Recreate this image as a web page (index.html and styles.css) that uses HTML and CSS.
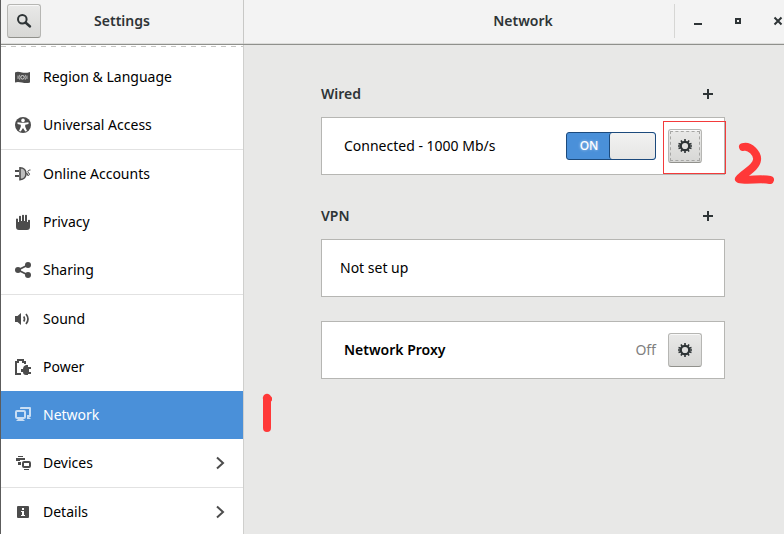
FILE: index.html
```html
<!DOCTYPE html>
<html lang="en">
<head>
    <meta charset="UTF-8">
    <meta name="viewport" content="width=device-width, initial-scale=1.0">
    <title>Settings - Network</title>
    <link rel="stylesheet" href="styles.css">
</head>
<body>
    <div class="window">
        <!-- Header bar -->
        <header class="header">
            <div class="header-left">
                <button class="btn" aria-label="Search">
                    <svg class="icon" viewBox="0 0 16 16"><circle cx="6.3" cy="6.3" r="4.3" fill="none" stroke="currentColor" stroke-width="2"/><path d="M9.5 9.5l4.5 4" stroke="currentColor" stroke-width="2.4" stroke-linecap="round"/></svg>
                </button>
                <h1 class="title">Settings</h1>
            </div>
            <div class="header-right">
                <h2 class="title">Network</h2>
                <div class="controls">
                    <button aria-label="Minimize"><svg class="icon" viewBox="0 0 16 16"><path d="M4 10h8v2H4z"/></svg></button>
                    <button aria-label="Maximize"><svg class="icon" viewBox="0 0 16 16"><path d="M5 5h6v6H5zM7 7v2h2V7z" fill-rule="evenodd"/></svg></button>
                    <button aria-label="Close"><svg class="icon" viewBox="0 0 16 16"><path d="M4.5 4.5l7 7M11.5 4.5l-7 7" stroke="currentColor" stroke-width="2"/></svg></button>
                </div>
            </div>
        </header>

        <div class="content">
            <!-- Sidebar -->
            <nav class="sidebar">
                <a href="#region">
                    <svg class="icon" viewBox="0 0 16 16"><path d="M0 3.5c2.5-1.3 4.5-.5 7 0s5 .5 8-.5v10.500c-3 1-5.500.5-8 0s-4.500-1-7 0z"/><g fill="none" stroke="#d8d8d8"><circle cx="7.500" cy="8.300" r="1.800"/><path d="M4.800 5.800q-1.600 2.500 0 5M10.200 5.800q1.600 2.500 0 5M3 6.500v3.500M12 6.500v3.500" stroke-width=".7"/></g></svg>
                    <span>Region &amp; Language</span>
                </a>
                <a href="#access">
                    <svg class="icon" viewBox="0 0 16 16"><circle cx="8" cy="8" r="8"/><circle cx="8" cy="3.4" r="1.8" fill="#fff"/><path d="M2.500 5.200l4 .5h3l4-.5v1.800l-3.300.8v2l1.800 4.200-1.700.6L8 11l-2.300 3.600-1.700-.6 1.800-4.200v-2L2.500 7z" fill="#fff"/></svg>
                    <span>Universal Access</span>
                </a>
                <a href="#accounts" class="divided">
                    <svg class="icon" viewBox="0 0 16 16"><path d="M0 4h4v2H0zM0 9h4v2H0z"/><path d="M5 1.800c8 0 8 11.800 0 11.800z" fill="#bdbdbd" stroke="currentColor" stroke-width="1.600"/><path d="M11 7.700h1.500v1.600q2 .4 2-1t-1.500-1.800q-.8-2.500 2.500-2.500" fill="none" stroke="currentColor"/></svg>
                    <span>Online Accounts</span>
                </a>
                <a href="#privacy">
                    <svg class="icon" viewBox="0 0 16 16"><path d="M1 5q0-.6 1-.6t1 .6v3h1V2.500q0-.8 1-.8t1 .8V7h1V1.600q0-.8 1-.8t1 .8V7h1V1.600q0-.8 1-.8t1 .8V8h1V6.500q0-.7 1-.7t1 .7V13q0 3-3 3H4q-3 0-3-3z"/></svg>
                    <span>Privacy</span>
                </a>
                <a href="#sharing">
                    <svg class="icon" viewBox="0 0 16 16"><path d="M13 3L3 8l10 5" fill="none" stroke="currentColor" stroke-width="1.800"/><circle cx="13" cy="3" r="3"/><circle cx="3" cy="8" r="3"/><circle cx="13" cy="13" r="3"/></svg>
                    <span>Sharing</span>
                </a>
                <a href="#sound" class="divided">
                    <svg class="icon" viewBox="0 0 16 16"><path d="M0 5h2.500L6 2v12l-3.500-3H0z"/><path d="M8.700 5.500q1.600 2.500 0 5M11 3q4 5 0 10" fill="none" stroke="currentColor" stroke-width="1.700"/></svg>
                    <span>Sound</span>
                </a>
                <a href="#power">
                    <svg class="icon" viewBox="0 0 16 16"><path d="M6 15H1V3h2V1h5v2h2v2" fill="none" stroke="currentColor" stroke-width="2"/><path d="M13 6v2h3v2h-2v3h2v2h-3v1h-2q-3 0-3-3H6v-3h2q0-3 3-4z"/></svg>
                    <span>Power</span>
                </a>
                <a href="#network" class="selected">
                    <svg class="icon" viewBox="0 0 16 16"><path d="M6 2V1h9v8h-3" fill="none" stroke="currentColor" stroke-width="2" stroke-linejoin="round"/><rect x="1" y="4" width="9" height="7" rx="1" fill="none" stroke="currentColor" stroke-width="2"/><path d="M3 12h5l2 2H1zM12 10h2l2 2h-4z"/></svg>
                    <span>Network</span>
                </a>
                <a href="#devices">
                    <svg class="icon" viewBox="0 0 16 16"><path d="M3 1h5v1H3zM1 3h9v2H5v1H1zM3 7h3v3H3zM9 14h5v1H9z"/><rect x="8" y="7" width="7" height="5" rx="1" fill="none" stroke="currentColor" stroke-width="2"/></svg>
                    <span>Devices</span>
                    <svg class="icon arrow" viewBox="0 0 16 16"><path d="M4 2.500L10 8l-6 5.500" fill="none" stroke="currentColor" stroke-width="2"/></svg>
                </a>
                <a href="#details" class="divided">
                    <svg class="icon" viewBox="0 0 16 16"><path d="M3 2h10q1 0 1 1v10q0 1-1 1H3q-1 0-1-1V3q0-1 1-1zM7 4v2h2V4zM6 7v1h1v3H6v1h4v-1H9V7z" fill-rule="evenodd"/></svg>
                    <span>Details</span>
                    <svg class="icon arrow" viewBox="0 0 16 16"><path d="M4 2.500L10 8l-6 5.500" fill="none" stroke="currentColor" stroke-width="2"/></svg>
                </a>
            </nav>

            <!-- Network panel -->
            <main class="panel">
                <svg class="mark mark-one" viewBox="0 0 10 40"><path d="M5 5v30M5 5l1 1" fill="none" stroke="#ff3838" stroke-width="8" stroke-linecap="round"/></svg>
                <div class="panel-inner">
                    <section>
                        <div class="section-head">
                            <h3>Wired</h3>
                            <button class="add" aria-label="Add wired connection"><svg class="icon" viewBox="0 0 16 16"><path d="M7 3h2v4h4v2H9v4H7V9H3V7h4z"/></svg></button>
                        </div>
                        <div class="card">
                            <label class="name" for="wired">Connected - 1000 Mb/s</label>
                            <span class="switch">
                                <input type="checkbox" id="wired" checked>
                                <span class="switch-text">ON</span>
                            </span>
                            <button class="btn focused" aria-label="Wired options">
                                <svg class="icon" viewBox="0 0 16 16"><circle cx="8" cy="8" r="4.2" fill="none" stroke="currentColor" stroke-width="2.2"/><path d="M8 1v3M8 12v3M1 8h3M12 8h3M3.900 2.400l1.700 2.300M10.400 11.300l1.700 2.300M12.100 2.400l-1.700 2.300M5.600 11.300l-1.700 2.300M1.500 5.600l2.700.9M11.800 9.500l2.700.9M14.500 5.600l-2.700.9M4.200 9.500l-2.700.9" stroke="currentColor" stroke-width="1.600"/></svg>
                            </button>
                            <div class="mark mark-box"></div>
                            <svg class="mark mark-two" viewBox="0 0 40 42"><path d="M9 5C16 3 24 12 23 18C22 26 10 31 5 37C13 39 27 36 36 38" fill="none" stroke="#ff3838" stroke-width="8" stroke-linecap="round" stroke-linejoin="round"/></svg>
                        </div>
                    </section>

                    <section>
                        <div class="section-head">
                            <h3>VPN</h3>
                            <button class="add" aria-label="Add VPN"><svg class="icon" viewBox="0 0 16 16"><path d="M7 3h2v4h4v2H9v4H7V9H3V7h4z"/></svg></button>
                        </div>
                        <div class="card empty">
                            <span class="name">Not set up</span>
                        </div>
                    </section>

                    <div class="card proxy">
                        <strong class="name">Network Proxy</strong>
                        <span class="status">Off</span>
                        <button class="btn" aria-label="Proxy options">
                            <svg class="icon" viewBox="0 0 16 16"><circle cx="8" cy="8" r="4.2" fill="none" stroke="currentColor" stroke-width="2.2"/><path d="M8 1v3M8 12v3M1 8h3M12 8h3M3.900 2.400l1.700 2.300M10.400 11.300l1.700 2.300M12.100 2.400l-1.700 2.300M5.600 11.300l-1.700 2.300M1.500 5.600l2.700.9M11.800 9.500l2.700.9M14.500 5.600l-2.700.9M4.200 9.500l-2.700.9" stroke="currentColor" stroke-width="1.600"/></svg>
                        </button>
                    </div>
                </div>
            </main>
        </div>
    </div>
</body>
</html>
```
FILE: styles.css
```css
* {
    box-sizing: border-box;
}

body {
    font-family: "Noto Sans", "Open Sans", sans-serif;
    font-size: 14px;
    line-height: 20px;
    color: #000;
    background-color: #e8e8e7;
    margin: 0;
    overflow: hidden;
}

h1, h2, h3 {
    font-size: 14px;
    font-weight: 600;
    color: #2e3436;
    margin: 0;
}

button {
    display: flex;
    justify-content: center;
    align-items: center;
    padding: 0;
    border: none;
    background: none;
    color: #2e3436;
    cursor: pointer;
}

.icon {
    display: block;
    flex: none;
    width: 16px;
    height: 16px;
    fill: currentColor;
}

/* the window runs a little past the right edge of the screen */
.window {
    display: flex;
    flex-direction: column;
    width: calc(100% + 18px);
    height: 100vh;
    border-left: 1px solid #5c5c5c;
}

.header {
    display: flex;
    flex: none;
    height: 45px;
    background-color: #f3f3f3;
    border-bottom: 1px solid #8f908c;
    box-shadow: inset 0 -1px #dcdcda;
}

.header-left {
    display: grid;
    grid-template-columns: 1fr auto 1fr;
    align-items: center;
    width: 243px;
    padding: 0 6px 2px;
    border-right: 1px solid #c8c8c6;
}

.header-right {
    flex: 1;
    display: grid;
    grid-template-columns: 1fr auto 1fr;
    align-items: center;
    padding-bottom: 2px;
}

.header-right .title {
    grid-column: 2;
}

.controls {
    display: flex;
    justify-self: end;
    height: 34px;
    padding: 0 4px 0 3px;
    border-left: 1px solid #d6d6d4;
}

.controls button {
    width: 40px;
}

.btn {
    width: 34px;
    height: 34px;
    border: 1px solid #b6b6b3;
    border-bottom-color: #91918c;
    border-radius: 3px;
    background: linear-gradient(#e9e9e8, #d7d7d5);
    box-shadow: inset 0 1px #f8f8f8;
}

.btn.focused {
    outline: 1px dashed #a6a6a4;
    outline-offset: -3px;
}

.content {
    display: flex;
    flex: 1;
    min-height: 0;
}

.sidebar {
    flex: none;
    width: 243px;
    padding-top: 8px;
    overflow: hidden;
    background: repeating-linear-gradient(90deg, #c6c6c4 0 5px, #fff 5px 10px) 0 1px / 100% 1px no-repeat #fff;
    border-right: 1px solid #cfcfcd;
}

.sidebar a {
    display: flex;
    align-items: center;
    gap: 12px;
    padding: 14px;
    color: #000;
    text-decoration: none;
}

.sidebar a.divided {
    border-top: 1px solid #e2e2e2;
}

.sidebar .icon {
    color: #4c4c4c;
}

.sidebar .arrow {
    margin-left: auto;
}

.sidebar a.selected {
    background-color: #4a90d9;
    color: #fff;
}

.sidebar .selected .icon {
    color: #c9def4;
}

.panel {
    position: relative;
    flex: 1;
    padding-top: 37px;
}

.panel-inner {
    width: 100%;
    max-width: 404px;
    margin: 0 auto;
}

section {
    margin-bottom: 29px;
}

.section-head {
    display: flex;
    justify-content: space-between;
    align-items: center;
    margin-bottom: 11px;
    padding-right: 5px;
}

.add {
    width: 24px;
    height: 24px;
}

.card {
    position: relative;
    display: flex;
    align-items: center;
    gap: 12px;
    height: 58px;
    padding: 0 22px;
    background-color: #fff;
    border: 1px solid #b6b6b3;
}

.card.empty {
    padding: 0 18px;
}

.card.proxy {
    margin-top: -5px;
}

.name {
    flex: 1;
}

strong.name {
    font-weight: 600;
}

.status {
    color: #808080;
}

.switch {
    position: relative;
    width: 90px;
    height: 28px;
}

.switch input {
    appearance: none;
    display: flex;
    justify-content: flex-end;
    width: 100%;
    height: 100%;
    margin: 0;
    border: 1px solid #1c4a7c;
    border-radius: 3px;
    background-color: #4a90d9;
}

.switch input::before {
    content: "";
    width: 45px;
    border-left: 1px solid #1c4a7c;
    border-radius: 3px;
    background: linear-gradient(#f2f2f1, #e6e6e4);
}

.switch-text {
    position: absolute;
    top: 4px;
    left: 0;
    width: 46px;
    text-align: center;
    font-size: 12px;
    font-weight: 500;
    color: #fff;
    text-shadow: 0 0 3px rgba(255, 255, 255, 0.6);
    pointer-events: none;
}

/* Hand-drawn marks over the panel */
.mark {
    position: absolute;
    pointer-events: none;
}

.mark-one {
    top: 348px;
    left: 18px;
    width: 10px;
    height: 40px;
}

.mark-box {
    top: 3px;
    right: -2px;
    width: 63px;
    height: 53px;
    border: 1px solid #f33b3b;
}

.mark-two {
    top: 24px;
    right: -50px;
    width: 40px;
    height: 42px;
}
```
